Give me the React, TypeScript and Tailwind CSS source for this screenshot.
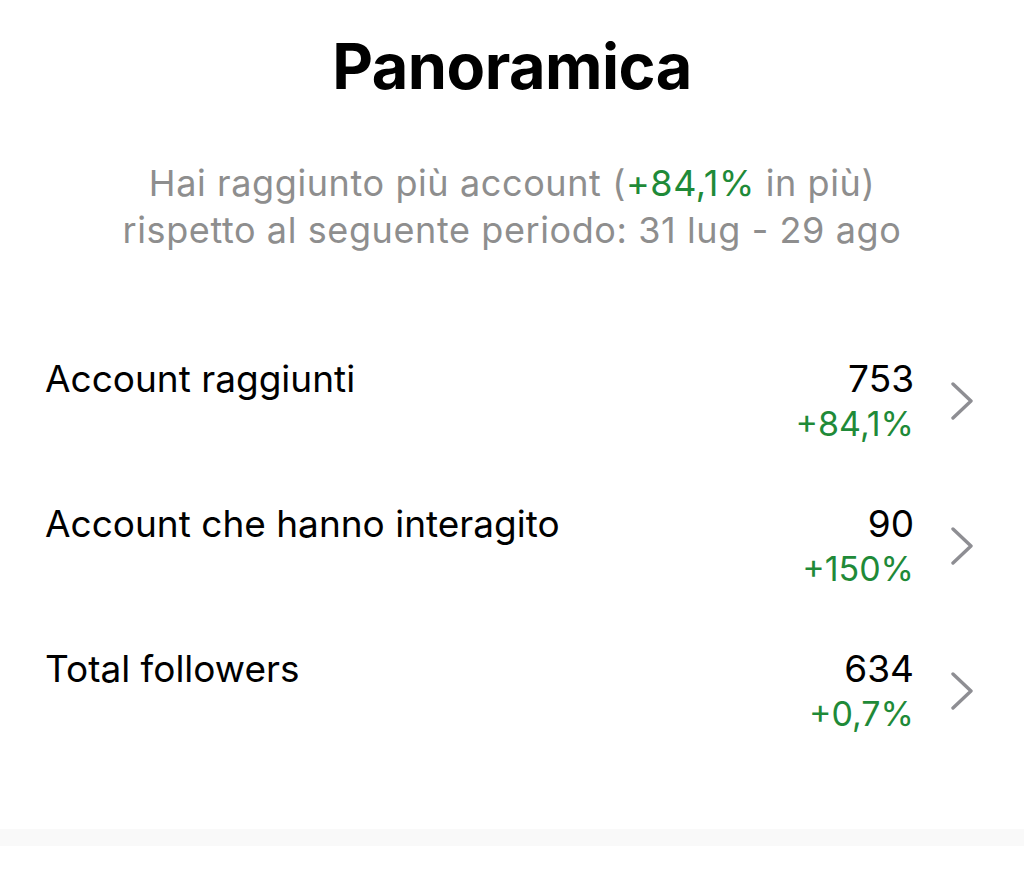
const rows = [
  { label: 'Account raggiunti', value: '753', delta: '+84,1%' },
  { label: 'Account che hanno interagito', value: '90', delta: '+150%' },
  { label: 'Total followers', value: '634', delta: '+0,7%' },
];

function Chevron() {
  return (
    <svg width="24" height="38" viewBox="0 0 24 38" fill="none" className="shrink-0">
      <path d="M3 2 L21 19 L3 36" stroke="#8e8e93" strokeWidth="3.4" strokeLinecap="round" strokeLinejoin="round" />
    </svg>
  );
}

export default function App() {
  return (
    <div className="w-[1024px] h-[873px] bg-white text-black overflow-hidden" style={{ fontFamily: 'Inter, "Noto Sans", sans-serif' }}>
      <h1 className="pt-[28px] text-center text-[63px] leading-[76px] font-bold tracking-[-0.5px]">Panoramica</h1>
      <p className="mt-[56px] text-center text-[36px] leading-[47px] tracking-[0.6px] text-[#8e8e8e]">
        Hai raggiunto più account (<span className="text-[#1f8a38]">+84,1%</span> in più)
        <br />
        rispetto al seguente periodo: 31 lug - 29 ago
      </p>
      <div className="mt-[102px] flex flex-col gap-[55px] pl-[45px] pr-[50px]">
        {rows.map((r) => (
          <div key={r.label} className="flex items-center">
            <div className="flex-1 self-start text-[37px] leading-[46px]">{r.label}</div>
            <div className="text-right">
              <div className="text-[37px] leading-[46px]">{r.value}</div>
              <div className="text-[34px] leading-[44px] text-[#1f8a38]">{r.delta}</div>
            </div>
            <div className="ml-[36px]"><Chevron /></div>
          </div>
        ))}
      </div>
      <div className="mt-[93px] h-[17px] bg-[#f9f9f9]" />
    </div>
  );
}
